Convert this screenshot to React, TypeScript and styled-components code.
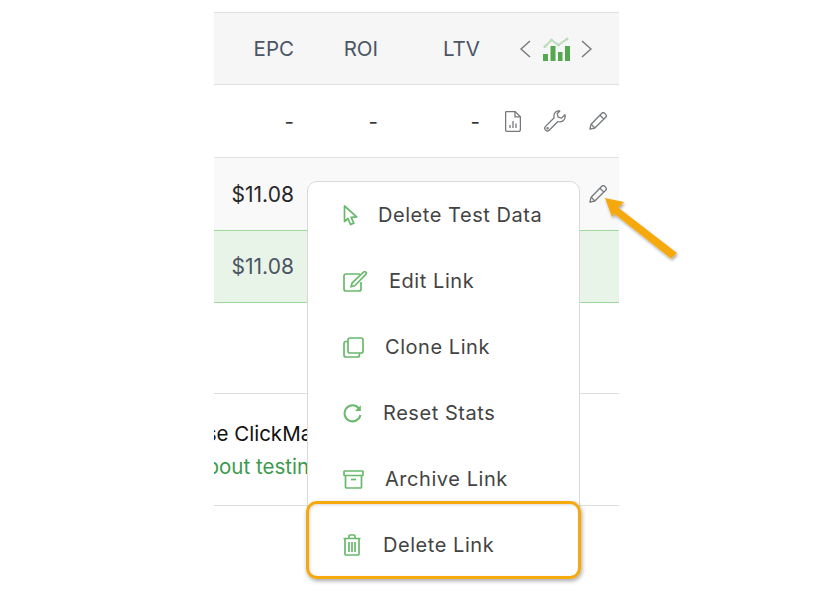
import React from "react";
import styled, { createGlobalStyle } from "styled-components";

const Global = createGlobalStyle`
  html, body { margin: 0; padding: 0; background: #fff; }
  body { font-family: Inter, "Liberation Sans", sans-serif; }
`;

const Page = styled.div`
  position: relative;
  width: 836px;
  height: 592px;
  overflow: hidden;
  padding: 12px 0 0 214px;
  box-sizing: border-box;
`;

const Panel = styled.div`
  width: 405px;
  overflow: hidden;
`;

const Row = styled.div<{ $bg: string; $line: string; $h: number; $color: string }>`
  display: grid;
  grid-template-columns: 80px 84px 102px 139px;
  align-items: center;
  height: ${(p) => p.$h}px;
  box-sizing: border-box;
  background: ${(p) => p.$bg};
  border-bottom: 1px solid ${(p) => p.$line};
  color: ${(p) => p.$color};
  font-size: 20.5px;
`;

const HeaderRow = styled(Row)`
  border-top: 1px solid #dfdfdf;
`;

const Cell = styled.div`
  text-align: right;
  white-space: nowrap;
`;

const MoneyCell = styled(Cell)`
  font-size: 21px;
  letter-spacing: 0.05px;
`;

const HeaderTools = styled.div`
  display: flex;
  align-items: center;
  gap: 11.5px;
  padding-left: 40px;
`;

const Actions = styled.div`
  display: flex;
  align-items: center;
  justify-content: flex-end;
  gap: 23px;
  padding-right: 12px;
`;

const Notice = styled.div`
  margin-top: 90px;
  height: 113px;
  box-sizing: border-box;
  border-top: 1px solid #dedede;
  border-bottom: 1px solid #dedede;
  padding-top: 23px;
  font-size: 20.5px;
  line-height: 33px;
  white-space: nowrap;
  overflow: hidden;
`;

const NoticeLine = styled.div<{ $shift: number; $color: string }>`
  margin-left: ${(p) => p.$shift}px;
  color: ${(p) => p.$color};
`;

const Menu = styled.div`
  position: absolute;
  left: 307px;
  top: 181px;
  width: 273px;
  height: 396px;
  box-sizing: border-box;
  background: #fff;
  border: 1px solid #d9d9d9;
  border-radius: 10px;
  display: flex;
  flex-direction: column;
`;

const MenuItem = styled.div<{ $gap: number }>`
  display: flex;
  align-items: center;
  height: 66px;
  flex: none;
  padding-left: 35px;
  gap: ${(p) => p.$gap}px;
  color: #434343;
  font-size: 20px;
  letter-spacing: 0.55px;
  white-space: nowrap;
`;

const IconSlot = styled.span`
  display: flex;
  flex: none;
`;

const Highlight = styled.div`
  position: absolute;
  left: 306px;
  top: 501px;
  width: 275px;
  height: 78px;
  box-sizing: border-box;
  border: 3px solid #f6a90d;
  border-radius: 11px;
  box-shadow: 1px 2px 4px rgba(0, 0, 0, 0.35), inset 1px 1px 3px rgba(0, 0, 0, 0.15);
`;

const ArrowArt = styled.svg`
  position: absolute;
  left: 600px;
  top: 194px;
`;

const gray = "#76797c";
const green = "#68b96c";

const Chevron = ({ flip }: { flip?: boolean }) => (
  <svg width="11" height="18" viewBox="0 0 11 18" fill="none" stroke="#73777c" strokeWidth="1.4">
    <path d={flip ? "M1 1l9 8-9 8" : "M10 1L1 9l9 8"} />
  </svg>
);

const ChartIcon = () => (
  <svg width="27" height="24" viewBox="0 0 27 24">
    <path d="M2 9.500L8.500 3l7 5 8.500-6" fill="none" stroke="#bcdcbc" strokeWidth="2" />
    <circle cx="2" cy="9.500" r="1.600" fill="#bcdcbc" />
    <circle cx="8.500" cy="3" r="1.600" fill="#bcdcbc" />
    <circle cx="15.500" cy="8" r="1.600" fill="#bcdcbc" />
    <circle cx="24" cy="2" r="1.600" fill="#bcdcbc" />
    <rect x="0" y="17" width="5" height="7" fill="#53a850" />
    <rect x="7.500" y="9" width="5" height="15" fill="#53a850" />
    <rect x="15" y="15" width="4.500" height="9" fill="#53a850" />
    <rect x="22" y="9" width="5" height="15" fill="#53a850" />
  </svg>
);

const FileChartIcon = () => (
  <svg width="16" height="21" viewBox="0 0 16 21" fill="none" stroke={gray} strokeWidth="1.3">
    <path d="M1.500.6h8.700l5.200 5.200v12.700c0 1-.7 1.900-1.900 1.900H2.500C1.300 20.400.6 19.600.6 18.500V1.500c0-.5.4-.9.9-.9z" />
    <path d="M10 .8v5.100h5.200" />
    <path d="M5 17v-3M8 17V10M11 17v-4.500" />
  </svg>
);

const WrenchIcon = () => (
  <svg width="22" height="22" viewBox="0 0 22 22" fill="none" stroke={gray} strokeWidth="1.3">
    <path d="M15.800 1c-3-.6-6 1.600-5.900 5 0 .7.1 1.200.3 1.700L1.500 16.400c-1 1-1 2.300-.2 3.300l.6.6c1 .9 2.400.8 3.300-.1l8.700-8.700c3.500 1.200 7.300-1.300 7.300-5 0-.7-.1-1.300-.3-1.800l-3.400 3.400-3.400-.9-.9-3.400L15.800 1z" strokeLinejoin="round" />
    <circle cx="3.600" cy="18.300" r=".6" />
  </svg>
);

const PencilIcon = () => (
  <svg width="18" height="18" viewBox="0 0 18 18" fill="none" stroke={gray} strokeWidth="1.3" strokeLinejoin="round">
    <path d="M12.800 1.300c.8-.8 2-.8 2.800 0l1.100 1.100c.8.8.8 2 0 2.800L5.800 16l-4.900 1.200L2.100 12.200 12.800 1.300z" />
    <path d="M11 3.200l3.900 3.900M2.200 12.200l3.600 3.700" />
  </svg>
);

const stroke = { fill: "none", stroke: green, strokeWidth: 1.7, strokeLinejoin: "round" as const };

const CursorIcon = () => (
  <svg width="15" height="21" viewBox="0 0 15 21" {...stroke}>
    <path d="M1.500 1v15.500l3.500-3 2.500 6 3.300-1.400-2.600-5.800 5.500-.4L1.500 1z" />
  </svg>
);

const EditIcon = () => (
  <svg width="25" height="21" viewBox="0 0 25 21" {...stroke}>
    <path d="M17 3H3a2 2 0 0 0-2 2v13a2 2 0 0 0 2 2h13a2 2 0 0 0 2-2v-7" />
    <path d="M20.500 1.200c.7-.7 1.600-.7 2.300 0 .6.700.6 1.600 0 2.200L12 14.500l-4 1.300 1.200-4L20.500 1.200z" />
  </svg>
);

const CloneIcon = () => (
  <svg width="21" height="21" viewBox="0 0 21 21" {...stroke}>
    <rect x="5" y="1" width="15" height="15" rx="2" />
    <path d="M5 4.500H3a2 2 0 0 0-2 2V18a2 2 0 0 0 2 2h11.500a2 2 0 0 0 2-2v-2" />
  </svg>
);

const ResetIcon = () => (
  <svg width="19" height="19" viewBox="0 0 19 19" fill="none" stroke={green} strokeWidth="2">
    <path d="M15.800 4.300A8 8 0 1 0 17.400 11" />
    <path d="M17.800 1.200v5.800h-5.800z" fill={green} stroke="none" />
  </svg>
);

const ArchiveIcon = () => (
  <svg width="21" height="19" viewBox="0 0 21 19" {...stroke}>
    <rect x="1" y="1" width="19" height="4.500" rx="0.600" />
    <path d="M2.500 5.500V17a1 1 0 0 0 1 1h14a1 1 0 0 0 1-1V5.500" />
    <path d="M8 9.500h5" />
  </svg>
);

const TrashIcon = () => (
  <svg width="18" height="22" viewBox="0 0 18 22" {...stroke}>
    <path d="M.5 4.500h17M6 4.500V2a1 1 0 0 1 1-1h4a1 1 0 0 1 1 1v2.500" />
    <path d="M2 4.500V20a1 1 0 0 0 1 1h12a1 1 0 0 0 1-1V4.500" />
    <path d="M6 8v10M9 8v10M12 8v10" />
  </svg>
);

const items = [
  { label: "Delete Test Data", gap: 20, icon: <CursorIcon /> },
  { label: "Edit Link", gap: 21, icon: <EditIcon /> },
  { label: "Clone Link", gap: 21, icon: <CloneIcon /> },
  { label: "Reset Stats", gap: 21, icon: <ResetIcon /> },
  { label: "Archive Link", gap: 21, icon: <ArchiveIcon /> },
  { label: "Delete Link", gap: 22, icon: <TrashIcon /> },
];

export default function App() {
  return (
    <Page>
      <Global />
      <Panel>
        <HeaderRow $bg="#f6f6f6" $line="#dfdfdf" $h={73} $color="#4b5563">
          <Cell>EPC</Cell>
          <Cell>ROI</Cell>
          <Cell>LTV</Cell>
          <HeaderTools>
            <Chevron />
            <ChartIcon />
            <Chevron flip />
          </HeaderTools>
        </HeaderRow>
        <Row $bg="#fff" $line="#e2e2e2" $h={73} $color="#333">
          <Cell>-</Cell>
          <Cell>-</Cell>
          <Cell>-</Cell>
          <Actions>
            <FileChartIcon />
            <WrenchIcon />
            <PencilIcon />
          </Actions>
        </Row>
        <Row $bg="#f9f9f9" $line="#9fd89b" $h={73} $color="#27272a">
          <MoneyCell>$11.08</MoneyCell>
          <Cell />
          <Cell />
          <Actions>
            <PencilIcon />
          </Actions>
        </Row>
        <Row $bg="#e9f4e8" $line="#9fd89b" $h={72} $color="#4b5563">
          <MoneyCell>$11.08</MoneyCell>
        </Row>
        <Notice>
          <NoticeLine $shift={-50} $color="#111">Please ClickMagick</NoticeLine>
          <NoticeLine $shift={-19} $color="#3c9a4e">about testing</NoticeLine>
        </Notice>
      </Panel>
      <Menu>
        {items.map((item) => (
          <MenuItem key={item.label} $gap={item.gap}>
            <IconSlot>{item.icon}</IconSlot>
            {item.label}
          </MenuItem>
        ))}
      </Menu>
      <Highlight />
      <ArrowArt width="84" height="72" viewBox="0 0 84 72">
        <defs>
          <filter id="arrowShadow" x="-20%" y="-20%" width="140%" height="140%">
            <feDropShadow dx="1" dy="2" stdDeviation="1.500" floodColor="#000" floodOpacity="0.35" />
          </filter>
        </defs>
        <g filter="url(#arrowShadow)" fill="#f6a90d">
          <path d="M5 4l19 4-5.600 5.800L77 59l-6 5.500L14 19.500 12 23 5 4z" />
        </g>
      </ArrowArt>
    </Page>
  );
}
